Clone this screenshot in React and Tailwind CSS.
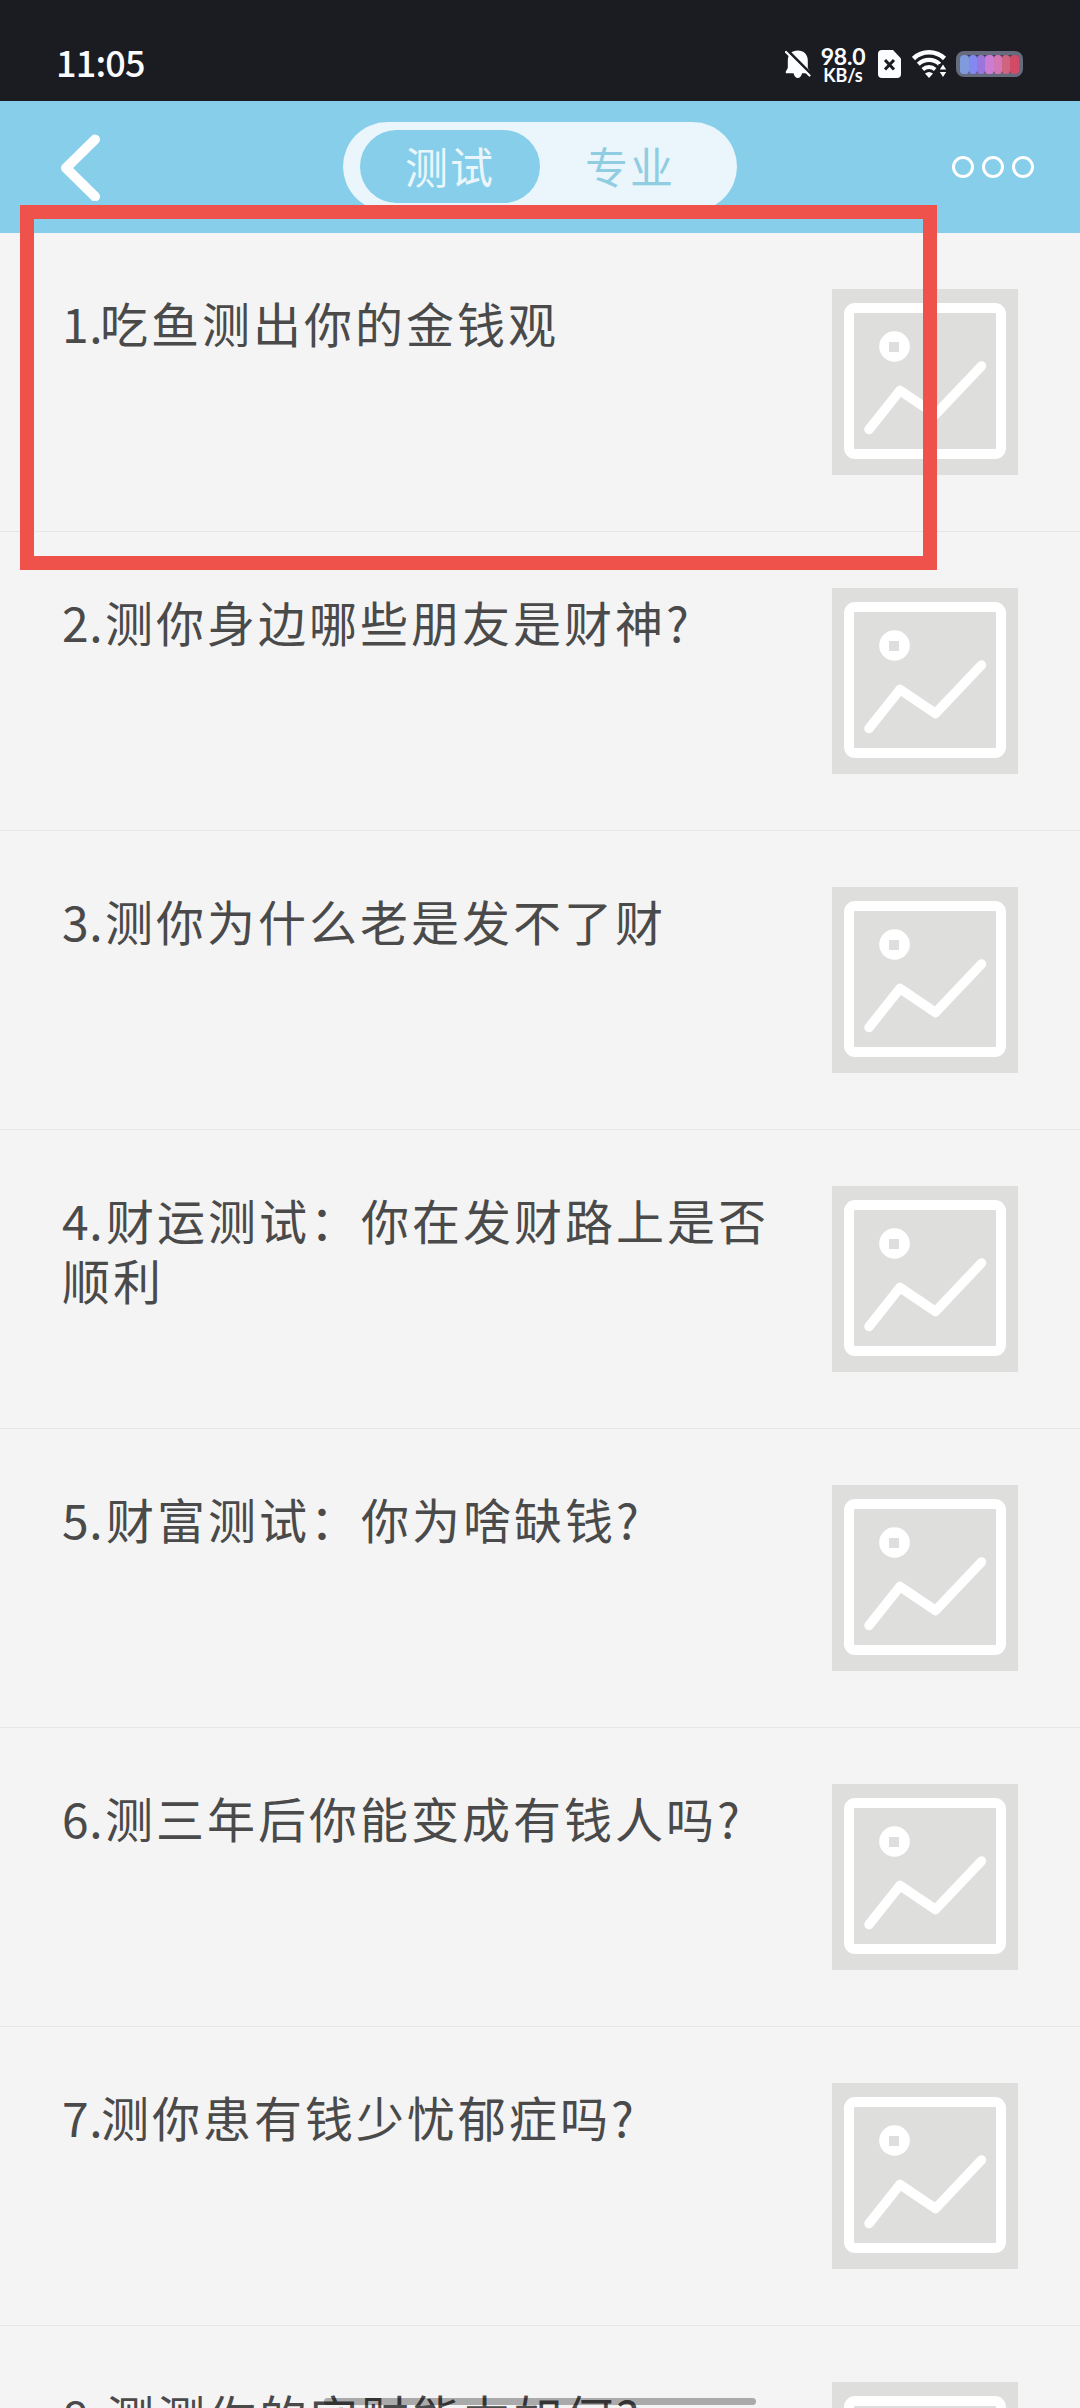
const tests = [
  { title: "吃鱼测出你的金钱观", num: "w-[38px]" },
  { title: "测你身边哪些朋友是财神?", num: "w-[43px]" },
  { title: "测你为什么老是发不了财", num: "w-[43px]" },
  { title: "财运测试：你在发财路上是否顺利", num: "w-[44px]" },
  { title: "财富测试：你为啥缺钱?", num: "w-[44px]" },
  { title: "测三年后你能变成有钱人吗?", num: "w-[43px]" },
  { title: "测你患有钱少忧郁症吗?", num: "w-[39px]" },
  { title: "测测你的守财能力如何?", num: "w-[44px]" },
];

const batteryCells = [
  "bg-[#7f9bdc]", "bg-[#8488f2]", "bg-[#9a76dc]", "bg-[#cb7cd3]",
  "bg-[#d576b4]", "bg-[#cf6480]", "bg-[#d14a66]",
];

function BellOff() {
  return (
    <svg width="26" height="29" viewBox="0 0 26 29" className="shrink-0">
      <path d="M12.8 0.5c-6 0-10 4-10 10v7.5L0.8 21.5v1.8h7.7c.8 3 2.3 4.7 4.3 4.7s3.5-1.7 4.3-4.7h7.7v-1.8L22.8 18v-7.500c0-6-4-10-10-10z" fill="#fbfcff" />
      <path d="M2 0L26 24" stroke="#1b1c21" strokeWidth="3" />
      <path d="M1 2L24.5 25.5" stroke="#fbfcff" strokeWidth="2.2" strokeLinecap="round" />
    </svg>
  );
}

function SimOff() {
  return (
    <svg width="23" height="28" viewBox="0 0 23 28" className="ml-3 shrink-0">
      <path d="M4 0h11l8 8.500V24a4 4 0 0 1-4 4H4a4 4 0 0 1-4-4V4a4 4 0 0 1 4-4z" fill="#fbfcff" />
      <path d="M7 10l9 9.500M16 10l-9 9.500" stroke="#1b1c21" strokeWidth="3" />
    </svg>
  );
}

function Wifi() {
  return (
    <svg width="35" height="28" viewBox="0 0 35 28" className="ml-[11px] shrink-0" fill="none">
      <path d="M1.500 8.500a22.500 22.500 0 0 1 31 0" stroke="#fbfcff" strokeWidth="4.6" />
      <path d="M6.300 14.200a15.500 15.500 0 0 1 21.400 0" stroke="#fbfcff" strokeWidth="4.2" />
      <path d="M10.800 19.500a9 9 0 0 1 12.400 0" stroke="#fbfcff" strokeWidth="3.8" />
      <path d="M13 23.500q4-3 8 0L17 28z" fill="#fbfcff" />
      <path d="M26.500 14H35v14h-8.500z" fill="#1b1c21" />
      <path d="M31 14.500l3.200 5h-6.400zM31 27l3.200-5h-6.400z" fill="#fbfcff" />
    </svg>
  );
}

function StatusBar() {
  return (
    <div className="flex h-[101px] shrink-0 items-start justify-between bg-[#1b1c21] pt-[50px] pr-[57px] pl-[56px] text-[#fbfcff]">
      <div className="-mt-[2px] font-['Noto_Sans_CJK_SC',sans-serif] text-[36px] leading-[27px] font-medium tracking-[-0.8px]">11:05</div>
      <div className="flex items-start">
        <BellOff />
        <div className="-mt-[5px] ml-[9px] w-[46px] text-center font-[Lato,sans-serif] font-bold">
          <div className="text-[23px] leading-[22px] tracking-[-0.2px]">98.0</div>
          <div className="text-[18px] leading-[17px] tracking-[-0.1px]">KB/s</div>
        </div>
        <SimOff />
        <Wifi />
        <div className="mt-px ml-[9px] flex h-[26px] w-[67px] items-center justify-center rounded-[8px] border-4 border-[#666b7d] bg-[#3d3f58]">
          {batteryCells.map((c) => (
            <div key={c} className={`h-[19px] w-[8.3px] rounded-[3.5px] ${c}`} />
          ))}
        </div>
      </div>
    </div>
  );
}

function Header() {
  return (
    <div className="flex h-[132px] shrink-0 items-center justify-between bg-[#87ceea] pr-[46px] pb-px pl-[60px]">
      <svg width="42" height="68" viewBox="0 0 42 68" fill="none">
        <path d="M35 6.5L6 35L35 63.5" stroke="#fff" strokeWidth="10" strokeLinecap="round" strokeLinejoin="round" />
      </svg>
      <div className="ml-[26px] flex h-[89px] w-[394px] items-center rounded-full bg-[#eaf6fc] px-[17px] text-[43px] tracking-[2px]">
        <div className="flex h-[73px] w-[180px] items-center justify-center rounded-full bg-[#87ceea] pb-[3px] text-[#eaf6fc]">测试</div>
        <div className="flex h-[73px] w-[180px] items-center justify-center pb-[3px] text-[#90cce2]">专业</div>
      </div>
      <div className="flex gap-2">
        <span className="size-[22px] rounded-full border-[3px] border-white" />
        <span className="size-[22px] rounded-full border-[3px] border-white" />
        <span className="size-[22px] rounded-full border-[3px] border-white" />
      </div>
    </div>
  );
}

function Placeholder() {
  return (
    <svg width="186" height="186" viewBox="0 0 186 186" fill="none" className="shrink-0">
      <path d="M0 0h186v186H0z" fill="#dededd" />
      <rect x="17" y="19" width="152" height="146" rx="6" stroke="#fff" strokeWidth="10" />
      <circle cx="62.5" cy="57.5" r="15.3" fill="#fff" />
      <path d="M57 53h10v10H57z" fill="#dededd" />
      <path d="M37 140.5L68 101.5L103.5 125.500L149.5 77" stroke="#fff" strokeWidth="9.5" strokeLinecap="round" strokeLinejoin="round" />
    </svg>
  );
}

export default function App() {
  return (
    <div className="relative flex h-[2408px] w-[1080px] flex-col overflow-hidden bg-[#f4f4f4] font-['Noto_Sans_CJK_SC',sans-serif]">
      <StatusBar />
      <Header />

      <ul>
        {tests.map((t, i) => (
          <li key={t.title} className="flex h-[299px] items-start justify-between border-b border-[#e6e6e6] px-[62px] pt-14">
            <p className="mt-[3px] w-[722px] text-[48px] leading-[60px] tracking-[3px] text-[#4a4a4a]">
              <span className={`inline-block whitespace-nowrap tracking-[0.5px] ${t.num}`}>{i + 1}.</span>
              {t.title}
            </p>
            <Placeholder />
          </li>
        ))}
      </ul>

      {/* highlight around the first item */}
      <div className="absolute top-[205px] left-[20px] h-[365px] w-[917px] border-[14px] border-[#ef524b]" />

      {/* gesture bar */}
      <div className="absolute top-[2398px] left-[324px] h-[7px] w-[432px] rounded-full bg-black/30" />
    </div>
  );
}
